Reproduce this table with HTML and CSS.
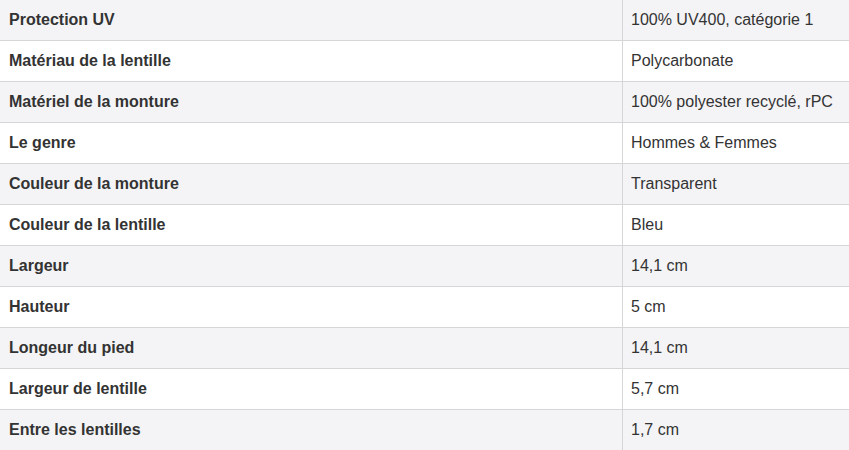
FILE: index.html
```html
<!DOCTYPE html>
<html lang="fr">
<head>
<meta charset="utf-8">
<link rel="stylesheet" href="styles.css">
</head>
<body>
<table class="specs">
  <tbody>
    <tr><th>Protection UV</th><td>100% UV400, catégorie 1</td></tr>
    <tr><th>Matériau de la lentille</th><td>Polycarbonate</td></tr>
    <tr><th>Matériel de la monture</th><td>100% polyester recyclé, rPC</td></tr>
    <tr><th>Le genre</th><td>Hommes &amp; Femmes</td></tr>
    <tr><th>Couleur de la monture</th><td>Transparent</td></tr>
    <tr><th>Couleur de la lentille</th><td>Bleu</td></tr>
    <tr><th>Largeur</th><td>14,1 cm</td></tr>
    <tr><th>Hauteur</th><td>5 cm</td></tr>
    <tr><th>Longeur du pied</th><td>14,1 cm</td></tr>
    <tr><th>Largeur de lentille</th><td>5,7 cm</td></tr>
    <tr><th>Entre les lentilles</th><td>1,7 cm</td></tr>
  </tbody>
</table>
</body>
</html>
```
FILE: styles.css
```css
html, body {
  margin: 0;
  padding: 0;
  background: #ffffff;
}
body {
  font-family: "Liberation Sans", Arial, sans-serif;
  font-size: 16px;
  color: #333333;
}
.specs {
  width: 849px;
  border-collapse: separate;
  border-spacing: 0;
  table-layout: fixed;
}
.specs tr:nth-child(odd) {
  background: #f4f4f6;
}
.specs th,
.specs td {
  height: 41px;
  padding: 0 8px 0 9px;
  border-bottom: 1px solid #d6d6d8;
  vertical-align: middle;
  text-align: left;
  line-height: 20px;
  box-sizing: border-box;
}
.specs th {
  width: 623px;
  font-weight: bold;
  border-right: 1px solid #d6d6d8;
}
.specs td {
  font-weight: normal;
  padding-left: 8px;
}
```
